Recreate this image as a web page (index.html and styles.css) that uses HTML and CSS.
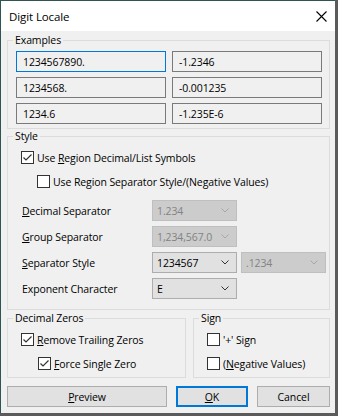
FILE: index.html
```html
<!DOCTYPE html>
<html>
<head>
<meta charset="utf-8">
<link rel="stylesheet" href="styles.css">
</head>
<body>
<div class="window">
  <div class="titlebar">
    <span class="title">Digit Locale</span>
    <svg class="close" width="11" height="11" viewBox="0 0 11 11"><path d="M0.5 0.5L10.5 10.5M10.5 0.5L0.5 10.5" stroke="#000" stroke-width="1.1" fill="none"/></svg>
  </div>
  <div class="content">
    <fieldset class="group">
      <legend>Examples</legend>
      <div class="examples">
        <div class="field focused">1234567890.</div>
        <div class="field">-1.2346</div>
        <div class="field">1234568.</div>
        <div class="field">-0.001235</div>
        <div class="field">1234.6</div>
        <div class="field">-1.235E-6</div>
      </div>
    </fieldset>

    <fieldset class="group">
      <legend>Style</legend>
      <div class="check first indent1">
        <span class="box"><svg width="11" height="11" viewBox="0 0 11 11"><path d="M1.5 5.5L4 8L9.5 2.5" stroke="#333" stroke-width="1.2" fill="none"/></svg></span>
        <span>Use <u>R</u>egion Decimal/List Symbols</span>
      </div>
      <div class="check next indent2">
        <span class="box"></span>
        <span>Use Region Separator Style/(Negative Values)</span>
      </div>
      <div class="form">
        <span class="lbl"><u>D</u>ecimal Separator</span>
        <div class="combo disabled"><span>1.234</span><svg width="8" height="5" viewBox="0 0 8 5"><path d="M0.5 0.5L4 4L7.5 0.5" stroke="#a8a8a8" fill="none"/></svg></div>
        <span></span>
        <span class="lbl"><u>G</u>roup Separator</span>
        <div class="combo disabled"><span>1,234,567.0</span><svg width="8" height="5" viewBox="0 0 8 5"><path d="M0.5 0.5L4 4L7.5 0.5" stroke="#a8a8a8" fill="none"/></svg></div>
        <span></span>
        <span class="lbl"><u>S</u>eparator Style</span>
        <div class="combo"><span>1234567</span><svg width="8" height="5" viewBox="0 0 8 5"><path d="M0.5 0.5L4 4L7.5 0.5" stroke="#333" fill="none"/></svg></div>
        <div class="combo disabled"><span>.1234</span><svg width="8" height="5" viewBox="0 0 8 5"><path d="M0.5 0.5L4 4L7.5 0.5" stroke="#a8a8a8" fill="none"/></svg></div>
        <span class="lbl">Exponent Character</span>
        <div class="combo"><span>E</span><svg width="8" height="5" viewBox="0 0 8 5"><path d="M0.5 0.5L4 4L7.5 0.5" stroke="#333" fill="none"/></svg></div>
        <span></span>
      </div>
    </fieldset>

    <div class="pair">
      <fieldset class="group zeros">
        <legend>Decimal Zeros</legend>
        <div class="check first indent1">
          <span class="box"><svg width="11" height="11" viewBox="0 0 11 11"><path d="M1.5 5.5L4 8L9.5 2.5" stroke="#333" stroke-width="1.2" fill="none"/></svg></span>
          <span><u>R</u>emove Trailing Zeros</span>
        </div>
        <div class="check next indent3">
          <span class="box"><svg width="11" height="11" viewBox="0 0 11 11"><path d="M1.5 5.5L4 8L9.5 2.5" stroke="#333" stroke-width="1.2" fill="none"/></svg></span>
          <span><u>F</u>orce Single Zero</span>
        </div>
      </fieldset>
      <fieldset class="group sign">
        <legend>Sign</legend>
        <div class="check first indent1">
          <span class="box"></span>
          <span>'+' Sign</span>
        </div>
        <div class="check next indent1">
          <span class="box"></span>
          <span>(<u>N</u>egative Values)</span>
        </div>
      </fieldset>
    </div>

    <div class="buttons">
      <div class="btn preview"><span><u>P</u>review</span></div>
      <div class="btn ok default"><span><u>O</u>K</span></div>
      <div class="btn cancel"><span>Cancel</span></div>
    </div>
  </div>
</div>
</body>
</html>
```
FILE: styles.css
```css
* { box-sizing: border-box; }
html, body { margin: 0; padding: 0; }
body {
  background: #5b5b5b;
  width: 338px;
  height: 416px;
  font-family: "Open Sans", "Noto Sans", sans-serif;
  font-size: 10.5px;
  letter-spacing: -0.1px;
  color: #000;
}
.window {
  width: 335px;
  height: 413px;
  background: #f0f0f0;
  border-left: 1px solid #2e5454;
  border-top: 1px solid #2e5454;
  display: flex;
  flex-direction: column;
}
.titlebar {
  height: 30px;
  flex: none;
  background: #fff;
  display: flex;
  align-items: center;
  justify-content: space-between;
  padding: 0 8px 0 8px;
  font-size: 11.5px;
  letter-spacing: -0.1px;
}
.close { display: block; }
.content {
  padding: 2px 5px 0 6px;
  display: flex;
  flex-direction: column;
}
fieldset.group {
  margin: 0;
  padding: 0;
  border: 1px solid #dcdcdc;
  min-width: 0;
}
legend {
  padding: 0 2px;
  margin-left: 5px;
  line-height: 14px;
}
.examples {
  display: grid;
  grid-template-columns: 150px 150px;
  column-gap: 6px;
  row-gap: 5px;
  margin: 4px 0 4px 8px;
}
.field {
  height: 21px;
  border: 1px solid #7a7a7a;
  padding-left: 6px;
  display: flex;
  align-items: center;
}
.field.focused { border-color: #0078d7; }
.check {
  display: flex;
  align-items: center;
  height: 13px;
  gap: 3px;
  white-space: nowrap;
}
.check.first { margin-top: 8px; }
.check.next { margin-top: 11px; }
.indent1 { margin-left: 13px; }
.indent2 { margin-left: 29px; }
.indent3 { margin-left: 30px; }
.box {
  width: 13px;
  height: 13px;
  flex: none;
  border: 1px solid #333;
  background: #fff;
  display: flex;
  align-items: center;
  justify-content: center;
}
.box svg { display: block; }
.form {
  display: grid;
  grid-template-columns: 126px 85px 85px;
  grid-auto-rows: 21px;
  column-gap: 4px;
  row-gap: 5px;
  margin: 12px 0 10px 14px;
}
.lbl { display: flex; align-items: center; white-space: nowrap; }
.combo {
  height: 21px;
  border: 1px solid #adadad;
  background: #e1e1e1;
  display: flex;
  align-items: center;
  justify-content: space-between;
  padding: 0 7px 0 4px;
  white-space: nowrap;
}
.combo svg { display: block; flex: none; }
.combo.disabled {
  background: #cccccc;
  border-color: #bfbfbf;
  color: #838383;
}
.pair {
  display: flex;
  gap: 7px;
  margin-top: 1px;
}
.zeros { width: 179px; flex: none; padding-bottom: 7px !important; }
.sign { flex: 1; padding-bottom: 7px !important; }
.buttons {
  display: flex;
  gap: 9px;
  margin-top: 8px;
}
.btn {
  height: 21px;
  border: 1px solid #adadad;
  background: #e1e1e1;
  display: flex;
  align-items: center;
  justify-content: center;
}
.btn.default { border: 2px solid #0078d7; }
.preview { width: 160px; }
.ok { width: 72px; }
.cancel { width: 73px; }
```
